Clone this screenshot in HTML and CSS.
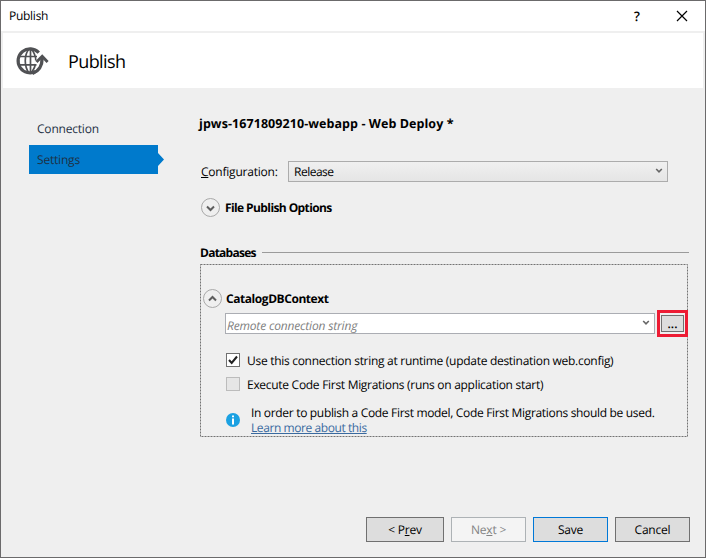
FILE: index.html
```html
<!DOCTYPE html>
<html lang="en">
<head>
<meta charset="utf-8">
<title>Publish</title>
<link rel="stylesheet" href="styles.css">
</head>
<body>
<div class="window">
  <div class="titlebar">
    <span class="caption">Publish</span>
    <span class="help">?</span>
    <svg class="close" width="12" height="12" viewBox="0 0 12 12"><path d="M1 1L11 11M11 1L1 11" stroke="#000" stroke-width="1.2" fill="none"/></svg>
  </div>
  <header class="header">
    <svg class="globe" width="34" height="30" viewBox="0 0 34 30" fill="none" stroke="#505154">
      <path d="M23.800 6.600A12 12 0 1 0 21 25.300" stroke-width="3.2"/>
      <path d="M14 3C9 9 9 20 14 27M16.500 3C19.500 7 20.800 10.500 20.800 14.500M15.500 3V27M4 10.500H22M4 18.800H21.500M20.500 18C20 21 19 23 17 26" stroke-width="1.7"/>
      <path d="M17.500 27.500C25 24.500 27.200 19.500 27.200 11.500" stroke-width="3.4"/>
      <path d="M21.500 16L27.200 10.200L32.600 16" stroke-width="2.800"/>
    </svg>
    <h1>Publish</h1>
  </header>
  <div class="body">
    <nav class="nav">
      <div class="nav-item"><span class="t-conn">Connection</span></div>
      <div class="nav-item active"><span class="t-set">Settings</span></div>
    </nav>
    <main class="main">
      <h2>jpws-1671809210-webapp - Web Deploy *</h2>
      <div class="config">
        <label class="t-config"><u>C</u>onfiguration:</label>
        <div class="select"><span class="t-rel">Release</span><svg class="chev" width="8" height="6" viewBox="0 0 8 6"><path d="M1.200 1L4 3.800L6.800 1" fill="none" stroke="#666" stroke-width="1.600"/></svg></div>
      </div>
      <div class="expander">
        <svg width="20" height="20" viewBox="0 0 20 20" fill="none"><circle cx="10.5" cy="9.5" r="9" stroke="#a9a9a9"/><path d="M7 8.500L10.500 12L14 8.500" stroke="#5e5e5e" stroke-width="2"/></svg>
        <b class="t-file">File Publish Options</b>
      </div>
      <div class="group-title"><b class="t-db">Databases</b><i class="rule"></i></div>
      <section class="group">
        <svg class="frame" width="489" height="174"><rect x="0.5" y="0.5" width="487" height="172" fill="none" stroke="#737373" stroke-dasharray="2 1"/></svg>
        <div class="context">
          <svg width="20" height="20" viewBox="0 0 20 20" fill="none"><circle cx="9.5" cy="9.5" r="9" stroke="#a9a9a9"/><path d="M6 11.500L9.500 8L13 11.500" stroke="#5e5e5e" stroke-width="2"/></svg>
          <b class="t-ctx">CatalogDBContext</b>
        </div>
        <div class="conn">
          <div class="combo"><em class="t-rem">Remote connection string</em><svg class="chev" width="8" height="6" viewBox="0 0 8 6"><path d="M1.200 1L4 3.800L6.800 1" fill="none" stroke="#666" stroke-width="1.600"/></svg></div>
          <div class="highlight"><div class="browse">...</div></div>
        </div>
        <div class="check first">
          <span class="box"><svg width="12" height="12" viewBox="0 0 12 12"><path d="M2 6L4.700 9L10 2.500" fill="none" stroke="#212121" stroke-width="2"/></svg></span>
          <span class="t-use">Use this connection string at runtime (update destination web.config)</span>
        </div>
        <div class="check second">
          <span class="box off"></span>
          <span class="t-exe">Execute Code First Migrations (runs on application start)</span>
        </div>
        <div class="info">
          <svg width="14" height="14" viewBox="0 0 14 14"><circle cx="7" cy="7" r="7" fill="#1ba1e2"/><path d="M6 2.500H8V4.300H6ZM6 5.500H8V11.500H6Z" fill="#fff"/></svg>
          <div class="info-text">
            <div class="t-inf">In order to publish a Code First model, Code First Migrations should be used.</div>
            <div class="link"><span class="t-lea">Learn more about this</span></div>
          </div>
        </div>
      </section>
    </main>
  </div>
  <footer class="footer">
    <div class="btn prev"><span>&lt; P<u>r</u>ev</span></div>
    <div class="btn disabled"><span>Ne<u>x</u>t &gt;</span></div>
    <div class="btn default"><span>Save</span></div>
    <div class="btn"><span>Cancel</span></div>
  </footer>
</div>
</body>
</html>
```
FILE: styles.css
```css
* { box-sizing: border-box; }
body { margin: 0; font: 12px/16px "Open Sans", "Noto Sans", sans-serif; color: #000; white-space: nowrap; text-rendering: geometricPrecision; }
svg { display: block; flex: none; }
h1, h2 { margin: 0; }
.window { width: 706px; height: 558px; border: 1px solid #6b6a6b; background: #efefef; display: flex; flex-direction: column; }
.titlebar { height: 30px; flex: none; background: #fff; display: flex; align-items: center; padding: 0 17px 0 8px; }
.caption { letter-spacing: -0.27px; }
.help { margin-left: auto; margin-right: 36px; font-size: 13px; font-weight: 600; }
.header { height: 55px; flex: none; margin: 2px 2px 0; background: #fff; display: flex; align-items: center; padding-left: 12px; }
.header h1 { font-size: 18px; line-height: 24px; font-weight: 400; letter-spacing: -0.6px; margin-left: 19px; padding-top: 3px; }
.body { display: flex; height: 350px; }
.nav { width: 134px; margin-left: 28px; padding-top: 26px; color: #1e3044; flex: none; }
.nav-item { width: 129px; height: 29px; padding: 7px 8px 0; margin-bottom: 2px; letter-spacing: -0.2px; }
.nav-item.active { background: #007acc; width: 135px; clip-path: polygon(0 0, 129px 0, 129px 8px, 135px 14.5px, 129px 21px, 129px 100%, 0 100%); }
.main { margin-left: 36px; padding-top: 27px; width: 490px; }
.main h2 { font-size: 12.5px; line-height: 18px; font-weight: 700; letter-spacing: 0.07px; }
.config { display: flex; align-items: center; height: 21px; margin: 28px 0 0 2px; }
.t-config { width: 87px; letter-spacing: -0.22px; }
.t-rel { letter-spacing: -0.5px; }
.select { width: 380px; height: 21px; border: 1px solid #acacac; background: linear-gradient(#f0f0f0, #e5e5e5); display: flex; align-items: center; padding: 0 4px 0 5px; }
.chev { margin-left: auto; margin-top: -1px; }
.expander { display: flex; align-items: center; height: 20px; margin: 16px 0 0 1px; gap: 5px; }
.t-file { letter-spacing: -0.6px; }
.t-db { letter-spacing: -0.75px; }
.t-ctx { letter-spacing: -0.44px; }
.t-rem { letter-spacing: -0.17px; }
.t-use, .t-exe { letter-spacing: -0.29px; }
.t-inf { letter-spacing: -0.32px; }
.t-lea { letter-spacing: -0.42px; }
.group-title { display: flex; align-items: center; height: 16px; margin: 27px 0 0 1px; }
.rule { height: 1px; background: #9b9b9b; margin-left: auto; margin-top: -1px; width: 427px; }
.group { height: 173px; margin: 3px 0 0 1px; position: relative; padding: 25px 0 0 3px; }
.frame { position: absolute; left: 0; top: 0; }
.context { display: flex; align-items: center; height: 20px; gap: 3px; }
.conn { display: flex; align-items: center; height: 27px; margin: 1px 0 0 22px; position: relative; }
.combo { width: 430px; height: 21px; border: 1px solid #abadb3; background: #fff; display: flex; align-items: center; padding: 4px 4px 0 1px; color: #808080; }
.combo .chev { margin-top: -6px; }
.highlight { width: 31px; height: 27px; border: 3px solid #ed1c34; margin-left: 2px; background: #efefef; padding: 2px 1px; }
.browse { height: 17px; border: 1px solid #707070; background: #ddd; text-align: center; line-height: 16px; font-weight: 600; }
.check { display: flex; align-items: center; height: 14px; margin-left: 23px; gap: 7px; }
.check .t-use, .check .t-exe { padding-top: 1px; }
.first { margin-top: 16px; }
.second { margin-top: 10px; }
.box { width: 14px; height: 14px; border: 1px solid #707070; background: #fff; }
.box.off { border-color: #bcbcbc; background: #e6e6e6; }
.info { display: flex; align-items: center; height: 30px; margin: 14px 0 0 23px; gap: 11px; }
.info-text { line-height: 15px; }
.link { color: #3a6a9f; text-decoration: underline; }
.footer { display: flex; gap: 7px; justify-content: flex-end; padding-right: 15px; margin-top: 79px; letter-spacing: -0.2px; }
.btn { width: 75px; height: 25px; border: 1px solid #707070; background: #ddd; display: flex; align-items: center; justify-content: center; }
.btn.prev { width: 78px; }
.btn.default { border-color: #0078d7; }
.btn.disabled { border-color: #adb2b5; background: #f4f4f4; color: #838383; }
```
